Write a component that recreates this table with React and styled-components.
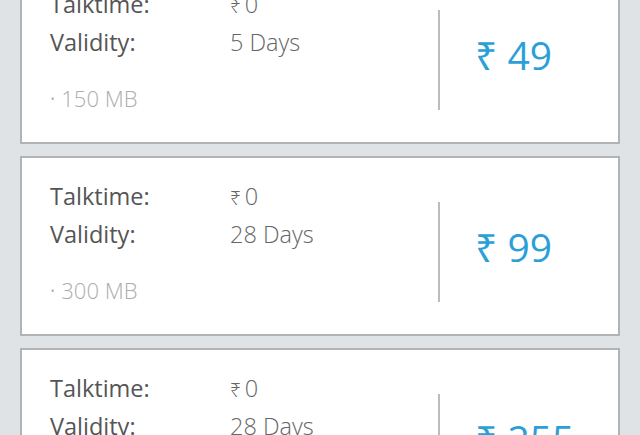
import React from 'react';
import styled, { createGlobalStyle } from 'styled-components';

const GlobalStyle = createGlobalStyle`
  html, body {
    margin: 0;
    padding: 0;
    background: #dfe3e6;
    font-family: "Open Sans", "Noto Sans", sans-serif;
    overflow: hidden;
  }
`;

const PlanList = styled.div`
  display: flex;
  flex-direction: column;
  gap: 12px;
  padding: 0 20px;
  margin-top: -36px;
`;

const Card = styled.div`
  display: flex;
  flex-direction: row;
  height: 180px;
  box-sizing: border-box;
  background: #fff;
  border: 2px solid #b3b3b3;
`;

const Details = styled.div`
  display: flex;
  flex-direction: column;
  width: 416px;
  padding: 20px 0 0 28px;
  box-sizing: border-box;
`;

const Row = styled.div`
  display: grid;
  grid-template-columns: 180px auto;
  font-size: 23.5px;
  line-height: 36px;
`;

const Label = styled.span`
  color: #555;
  font-weight: 400;
`;

const Value = styled.span`
  color: #666;
  font-weight: 300;
`;

const Rupee = styled.span`
  font-size: 0.8em;
  margin-right: 4px;
`;

const Data = styled.div`
  margin-top: 24px;
  font-size: 22px;
  line-height: 28px;
  font-weight: 300;
  color: #adadad;
`;

const Dot = styled.span`
  font-size: 14px;
  margin-right: 6px;
  vertical-align: 3px;
`;

const Divider = styled.div`
  align-self: center;
  margin-top: 12px;
  width: 2px;
  height: 100px;
  background: #bcbcbc;
`;

const Price = styled.div`
  align-self: center;
  padding-left: 35px;
  font-size: 39px;
  color: #2a9fd8;
  font-weight: 400;
`;

const plans = [
  { talktime: 0, validity: '5 Days', data: '150 MB', price: 49 },
  { talktime: 0, validity: '28 Days', data: '300 MB', price: 99 },
  { talktime: 0, validity: '28 Days', data: '1 GB', price: 255 },
];

const PlanCard = ({ plan }) => (
  <Card>
    <Details>
      <Row>
        <Label>Talktime:</Label>
        <Value><Rupee>₹</Rupee>{plan.talktime}</Value>
      </Row>
      <Row>
        <Label>Validity:</Label>
        <Value>{plan.validity}</Value>
      </Row>
      <Data><Dot>•</Dot>{plan.data}</Data>
    </Details>
    <Divider />
    <Price>₹ {plan.price}</Price>
  </Card>
);

const App = () => (
  <>
    <GlobalStyle />
    <PlanList>
      {plans.map((p, i) => (
        <PlanCard key={i} plan={p} />
      ))}
    </PlanList>
  </>
);

export default App;
